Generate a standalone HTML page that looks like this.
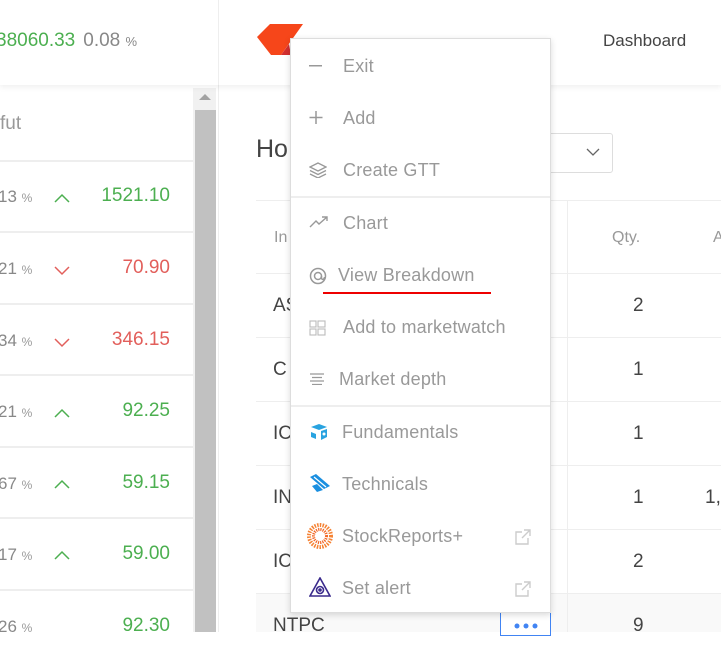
<!DOCTYPE html>
<html><head><meta charset="utf-8"><style>
*{margin:0;padding:0;box-sizing:border-box}
body{width:721px;height:632px;overflow:hidden;background:#fff;font-family:"Liberation Sans",sans-serif;position:relative;color:#444}
.a{position:absolute}
.top{left:0;top:0;width:721px;height:85px;background:#fff;box-shadow:0 2px 6px rgba(0,0,0,.07);z-index:2}
.lrow{left:0;width:193px;border-top:2px solid #eee;height:72px}
.pct{left:-2px;font-size:17px;color:#888}
.pct small{font-size:12px;color:#999}
.val{right:551px;font-size:19px}
.g{color:#4caf50}.r{color:#e25f5b}
.menu{left:290px;top:38px;width:261px;height:575px;background:#fff;border:1px solid #ddd;box-shadow:0 2px 6px rgba(0,0,0,.15);z-index:5}
.it{position:absolute;left:52px;font-size:18px;color:#999;line-height:20px;letter-spacing:0.2px}
.ic{position:absolute;left:18px}
.sep{position:absolute;left:0;width:259px;border-top:2px solid #eee}
.tl{left:256px;width:465px;border-top:1px solid #eee}
.q{left:633px;font-size:19px;color:#444}
</style></head><body>
<div class="a top">
<div class="a" style="left:-4px;top:30px;font-size:19px;"><span style="color:#4caf50">38060.33</span><span style="color:#888;margin-left:8px">0.08 <small style="font-size:13px">%</small></span></div>
<div class="a" style="left:218px;top:0;width:1px;height:85px;background:#eee"></div>
<svg class="a" style="left:257px;top:24px" width="46" height="32"><polygon points="0,13 13,0 46,0 24,31 14,31" fill="#f6461a"/><polygon points="24,31 32,20 34,31" fill="#d32f2f"/></svg>
<div class="a" style="left:603px;top:31px;font-size:17px;color:#444">Dashboard</div>
</div>
<div class="a" style="left:218px;top:85px;width:1px;height:547px;background:#eee"></div>
<div class="a" style="left:193px;top:88px;width:23px;height:544px;background:#f1f1f1"></div>
<div class="a" style="left:195px;top:110px;width:21px;height:522px;background:#c1c1c1"></div>
<svg class="a" style="left:199px;top:93px" width="12" height="8"><polygon points="0,7 6,1 12,7" fill="#a3a3a3"/></svg>
<div class="a" style="left:0;top:113px;font-size:19px;color:#999">fut</div>
<div class="a lrow" style="top:160px"></div><div class="a lrow" style="top:231px"></div><div class="a lrow" style="top:303px"></div><div class="a lrow" style="top:374px"></div><div class="a lrow" style="top:446px"></div><div class="a lrow" style="top:517px"></div><div class="a lrow" style="top:589px"></div>
<div class="a pct" style="top:187px">13 <small>%</small></div>
<div class="a pct" style="top:259px">21 <small>%</small></div>
<div class="a pct" style="top:331px">34 <small>%</small></div>
<div class="a pct" style="top:402px">21 <small>%</small></div>
<div class="a pct" style="top:474px">67 <small>%</small></div>
<div class="a pct" style="top:545px">17 <small>%</small></div>
<div class="a pct" style="top:617px">26 <small>%</small></div>
<svg class="a" style="left:53px;top:190px" width="20" height="400" fill="none" stroke-width="1.5">
<polyline points="2,12 9,5 16,12" stroke="#4caf50"/>
<polyline points="2,77 9,84 16,77" stroke="#e25f5b"/>
<polyline points="2,149 9,156 16,149" stroke="#e25f5b"/>
<polyline points="2,227 9,220 16,227" stroke="#4caf50"/>
<polyline points="2,298 9,291 16,298" stroke="#4caf50"/>
<polyline points="2,369 9,362 16,369" stroke="#4caf50"/>
</svg>
<div class="a val g" style="top:185px">1521.10</div>
<div class="a val r" style="top:257px">70.90</div>
<div class="a val r" style="top:329px">346.15</div>
<div class="a val g" style="top:400px">92.25</div>
<div class="a val g" style="top:472px">59.15</div>
<div class="a val g" style="top:543px">59.00</div>
<div class="a val g" style="top:615px">92.30</div>
<div class="a" style="left:256px;top:135px;font-size:25px;color:#444">Ho</div>
<div class="a" style="left:540px;top:133px;width:73px;height:40px;border:1px solid #ddd;border-radius:3px"></div>
<svg class="a" style="left:586px;top:147px" width="14" height="10"><polyline points="1,2 7,8 13,2" fill="none" stroke="#666" stroke-width="1.3"/></svg>
<div class="a tl" style="top:200px"></div>
<div class="a tl" style="top:273px"></div><div class="a tl" style="top:337px"></div><div class="a tl" style="top:401px"></div><div class="a tl" style="top:465px"></div><div class="a tl" style="top:529px"></div><div class="a tl" style="top:593px"></div>
<div class="a" style="left:256px;top:594px;width:465px;height:38px;background:#f9f9f9"></div>
<div class="a" style="left:567px;top:200px;width:1px;height:432px;background:#eee"></div>
<div class="a" style="left:274px;top:229px;font-size:16px;color:#999">In</div>
<div class="a" style="left:612px;top:229px;font-size:16px;color:#999">Qty.</div>
<div class="a" style="left:713px;top:229px;font-size:16px;color:#999">A</div>
<div class="a" style="left:273px;top:295px;font-size:19px">AS</div>
<div class="a" style="left:273px;top:359px;font-size:19px">C</div>
<div class="a" style="left:273px;top:423px;font-size:19px">IC</div>
<div class="a" style="left:273px;top:487px;font-size:19px">IN</div>
<div class="a" style="left:273px;top:551px;font-size:19px">IC</div>
<div class="a" style="left:273px;top:615px;font-size:19px">NTPC</div>
<div class="a q" style="top:295px">2</div><div class="a q" style="top:359px">1</div><div class="a q" style="top:423px">1</div><div class="a q" style="top:487px">1</div><div class="a q" style="top:551px">2</div><div class="a q" style="top:615px">9</div>
<div class="a" style="left:705px;top:487px;font-size:19px">1,</div>
<div class="a" style="left:500px;top:612px;width:51px;height:24px;border:1px solid #4184f3;background:#fff"></div>
<svg class="a" style="left:514px;top:622px" width="24" height="8"><circle cx="3" cy="4" r="2.5" fill="#4184f3"/><circle cx="12" cy="4" r="2.5" fill="#4184f3"/><circle cx="21" cy="4" r="2.5" fill="#4184f3"/></svg>
<div class="a menu">
<svg class="ic" style="top:26px" width="14" height="2"><rect width="13" height="1.5" fill="#999"/></svg><div class="it" style="top:17px">Exit</div>
<svg class="ic" style="top:72px" width="14" height="14"><path d="M7 0v13M0.5 6.5h13" stroke="#999" stroke-width="1.5"/></svg><div class="it" style="top:69px">Add</div>
<svg class="ic" style="top:123px" width="18" height="16" fill="none" stroke="#999" stroke-width="1.3"><path d="M9 1L1 5l8 4 8-4z"/><path d="M1 8.5l8 4 8-4M1 12l8 4 8-4"/></svg><div class="it" style="top:121px">Create GTT</div>
<div class="sep" style="top:157px"></div>
<svg class="ic" style="top:177px" width="20" height="12" fill="none" stroke="#999" stroke-width="1.4"><path d="M1 11l6-6 3 3 8-7M13 1h5v4"/></svg><div class="it" style="top:174px">Chart</div>
<svg class="ic" style="top:228px" width="18" height="18" fill="none" stroke="#999" stroke-width="1.5"><circle cx="9" cy="9" r="7.5"/><circle cx="9" cy="9" r="3.5"/><path d="M12.5 9v2c0 2 3 2 3-1"/></svg><div class="it" style="left:47px;top:226px">View Breakdown</div>
<div class="a" style="left:32px;top:253px;width:168px;height:2px;background:#e00"></div>
<svg class="ic" style="top:281px" width="17" height="16" fill="none" stroke="#bbb" stroke-width="1.1"><rect x="1" y="1" width="6" height="6"/><rect x="9" y="1" width="7" height="6"/><rect x="1" y="9" width="6" height="6"/><rect x="9" y="9" width="7" height="6"/></svg><div class="it" style="top:278px">Add to marketwatch</div>
<svg class="ic" style="top:334px" width="16" height="12" fill="none" stroke="#999" stroke-width="1.3"><path d="M1 1h14M3 4.5h10M1 8h14M3 11.5h10"/></svg><div class="it" style="left:48px;top:330px">Market depth</div>
<div class="sep" style="top:366px"></div>
<svg class="ic" style="top:384px" width="20" height="18"><path d="M10 1l8 3-8 3-8-3z" fill="#29a3e0"/><path d="M12 8l6-2v8l-6 3z" fill="#29a3e0"/><path d="M2 9l5 2v5l-5-2z" fill="#29a3e0"/><circle cx="15" cy="11" r="1.5" fill="#fff"/></svg><div class="it" style="left:51px;top:383px">Fundamentals</div>
<svg class="ic" style="top:435px" width="22" height="18"><path d="M1 3l6-3 14 12-6 3z" fill="#1a8fe0"/><path d="M3 12l5-2 6 6-6 2z" fill="#1a8fe0"/><path d="M5 3l12 10" stroke="#fff" stroke-width="1.2"/></svg><div class="it" style="left:51px;top:435px">Technicals</div>
<svg class="ic" style="left:16px;top:484px" width="26" height="26"><circle cx="13" cy="13" r="11" fill="none" stroke="#f58233" stroke-width="4" stroke-dasharray="1.5 1.2"/><circle cx="13" cy="13" r="6.5" fill="none" stroke="#f26522" stroke-width="3" stroke-dasharray="1.2 1"/></svg><div class="it" style="left:51px;top:487px">StockReports+</div>
<svg class="a" style="left:224px;top:490px" width="16" height="16" fill="none" stroke="#ccc" stroke-width="1.4"><path d="M13 9v6H1V3h6M9 1h6v6M15 1L7 9"/></svg>
<svg class="ic" style="top:538px" width="22" height="20" fill="none" stroke="#3a2a8c" stroke-width="1.6"><path d="M11 1L1 19h20z"/><circle cx="11" cy="13" r="3.5"/><circle cx="11" cy="13" r="1" fill="#3a2a8c"/></svg><div class="it" style="left:51px;top:539px">Set alert</div>
<svg class="a" style="left:224px;top:542px" width="16" height="16" fill="none" stroke="#ccc" stroke-width="1.4"><path d="M13 9v6H1V3h6M9 1h6v6M15 1L7 9"/></svg>
</div>
</body></html>
